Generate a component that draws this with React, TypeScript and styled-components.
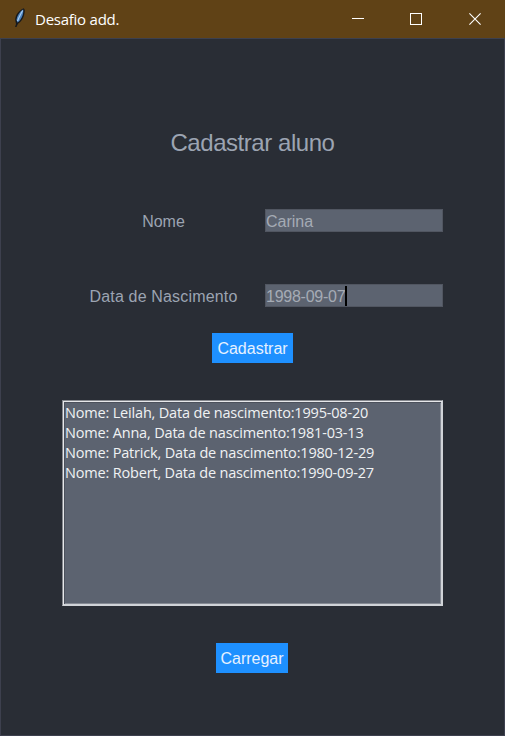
import React from "react";
import styled, { createGlobalStyle } from "styled-components";

const GlobalStyle = createGlobalStyle`
  * { box-sizing: border-box; }
  body { margin: 0; background: #292d35; }
`;

const Window = styled.div`
  width: 505px;
  height: 736px;
  display: flex;
  flex-direction: column;
  background: #292d35;
  font-family: "Liberation Sans", Arial, sans-serif;
  overflow: hidden;
`;

const TitleBar = styled.header`
  height: 38px;
  flex: none;
  display: flex;
  align-items: center;
  background: #604216;
  color: #fff;
`;

const AppIcon = styled.svg`
  width: 14px;
  height: 22px;
  margin: 0 8px 2px 13px;
`;

const WindowTitle = styled.span`
  flex: 1;
  padding-bottom: 1px;
  font: 15px/20px "Open Sans", "Noto Sans", sans-serif;
  letter-spacing: -0.25px;
  font-variant-ligatures: none;
  white-space: nowrap;
`;

const WindowControls = styled.div`
  display: flex;
  height: 38px;
`;

const ControlButton = styled.button<{ $width: number }>`
  width: ${(p) => p.$width}px;
  height: 38px;
  padding: 0;
  border: 0;
  background: none;
  display: flex;
  align-items: center;
  justify-content: center;
`;

const Content = styled.main`
  flex: 1;
  display: flex;
  flex-direction: column;
  align-items: center;
  border: 1px solid #3d404e;
`;

const Heading = styled.h1`
  margin: 89px 0 0;
  font-size: 24px;
  line-height: 30px;
  font-weight: 400;
  letter-spacing: -0.45px;
  color: #9ca4b2;
  white-space: nowrap;
`;

const Form = styled.div`
  width: 381px;
  margin-top: 51px;
  display: grid;
  grid-template-columns: 203px 178px;
  row-gap: 52px;
`;

const Label = styled.label<{ $tracking?: number }>`
  height: 23px;
  text-align: center;
  font-size: 16px;
  line-height: 25px;
  letter-spacing: ${(p) => p.$tracking ?? 0}px;
  color: #9ca4b2;
  white-space: nowrap;
`;

const Entry = styled.div<{ $tracking?: number }>`
  height: 23px;
  padding: 2px 0 0;
  display: flex;
  align-items: center;
  background: #5c6370;
  border: 1px solid #515661;
  font-size: 16px;
  line-height: 22px;
  letter-spacing: ${(p) => p.$tracking ?? 0}px;
  color: #a5abb5;
  white-space: nowrap;
`;

const Caret = styled.span`
  width: 2px;
  height: 20px;
  margin-bottom: 2px;
  background: #000;
`;

const ActionButton = styled.button<{ $width: number; $top: number; $right?: number }>`
  width: ${(p) => p.$width}px;
  height: 30px;
  margin-top: ${(p) => p.$top}px;
  margin-right: ${(p) => p.$right ?? 0}px;
  padding: 2px 0 0;
  border: 0;
  background: #1e90ff;
  color: #e6f1ff;
  font: 16px/20px "Liberation Sans", Arial, sans-serif;
  white-space: nowrap;
`;

const ListBox = styled.ul`
  width: 381px;
  height: 206px;
  margin: 37px 0 0;
  padding: 2px 0 0 2px;
  list-style: none;
  background: #5c6370;
  border: 1px solid;
  border-color: #85888e #d0d3d8 #d0d3d8 #85888e;
  box-shadow: inset 1px 1px #e6e7ea, inset -1px -1px #d0d3d8,
    inset 2px 2px #4b505b, inset -2px -2px #858a94;
`;

const ListItem = styled.li`
  height: 20px;
  font: 14.5px/20px "Open Sans", "Noto Sans", sans-serif;
  letter-spacing: -0.18px;
  color: #f0f2f4;
  white-space: nowrap;
`;

const students = [
  { name: "Leilah", birth: "1995-08-20" },
  { name: "Anna", birth: "1981-03-13" },
  { name: "Patrick", birth: "1980-12-29" },
  { name: "Robert", birth: "1990-09-27" },
];

function Feather() {
  return (
    <AppIcon viewBox="0 0 14 22">
      <path d="M10.8 1.2 C6 3 2.2 8 2.2 13 L3 17 L2 20 L3.5 20 L5 16.8 C9 14.5 11.8 9 11.8 3 Z" fill="#17191c" />
      <path d="M10 2.6 C6 5.5 3.8 9.5 3.5 13 L4.6 15.4 C8 13 10.6 8 10.3 3Z" fill="#4c82bd" />
      <path d="M9.6 3.4 C7.8 7 5.8 10.5 4.5 14" fill="none" stroke="#a9cef0" strokeWidth="1.2" />
    </AppIcon>
  );
}

export default function App() {
  return (
    <Window>
      <GlobalStyle />
      <TitleBar>
        <Feather />
        <WindowTitle>Desafio add.</WindowTitle>
        <WindowControls>
          <ControlButton $width={58} aria-label="Minimizar">
            <svg width="12" height="12"><path d="M0 5.5H12" stroke="#fff" /></svg>
          </ControlButton>
          <ControlButton $width={58} aria-label="Maximizar">
            <svg width="12" height="12"><rect x=".5" y=".5" width="11" height="11" fill="none" stroke="#fff" /></svg>
          </ControlButton>
          <ControlButton $width={60} aria-label="Fechar">
            <svg width="12" height="12"><path d="M.4 .4L11.6 11.6M11.6 .4L.4 11.6" stroke="#fff" strokeWidth="1.1" /></svg>
          </ControlButton>
        </WindowControls>
      </TitleBar>
      <Content>
        <Heading>Cadastrar aluno</Heading>
        <Form>
          <Label>Nome</Label>
          <Entry>Carina</Entry>
          <Label $tracking={0.17}>Data de Nascimento</Label>
          <Entry $tracking={-0.25}>1998-09-07<Caret /></Entry>
        </Form>
        <ActionButton $width={81} $top={26}>Cadastrar</ActionButton>
        <ListBox>
          {students.map((s) => (
            <ListItem key={s.name}>Nome: {s.name}, Data de nascimento:{s.birth}</ListItem>
          ))}
        </ListBox>
        <ActionButton $width={72} $top={37} $right={1}>Carregar</ActionButton>
      </Content>
    </Window>
  );
}
